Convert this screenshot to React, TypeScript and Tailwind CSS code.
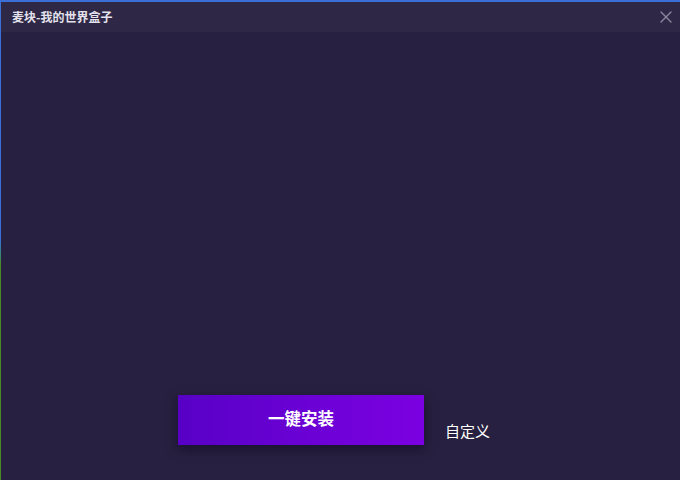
import { X } from 'lucide-react'

export default function App() {
  return (
    <div className="flex h-[480px] w-[680px] overflow-hidden bg-[#272040] font-['Noto_Sans_CJK_SC',sans-serif]">
      <div className="w-px shrink-0 bg-gradient-to-b from-[#3a6fd8] from-50% to-[#4a8a20] to-55%" />
      <div className="flex min-w-0 flex-1 flex-col">
        <div className="h-[2px] bg-[#3a6fd8]" />
        <div className="flex h-[30px] items-center justify-between bg-[#2e2846] pl-[11px] pr-[4px]">
          <span className="text-[12px] font-bold text-[#e4e2ec]">麦块-我的世界盒子</span>
          <X className="h-[20px] w-[20px] text-[#8b88a0]" strokeWidth={1.6} />
        </div>
        <div className="flex flex-1 items-end pb-[35px] pl-[177px]">
          <button className="flex h-[50px] w-[246px] items-center justify-center bg-gradient-to-r from-[#5800c6] to-[#7c00e2] pb-[4px] text-[16.5px] font-semibold text-white shadow-[0_4px_10px_rgba(10,0,30,0.5)]">
            一键安装
          </button>
          <span className="mb-[3px] ml-[21px] text-[15px] text-white">自定义</span>
        </div>
      </div>
    </div>
  )
}
